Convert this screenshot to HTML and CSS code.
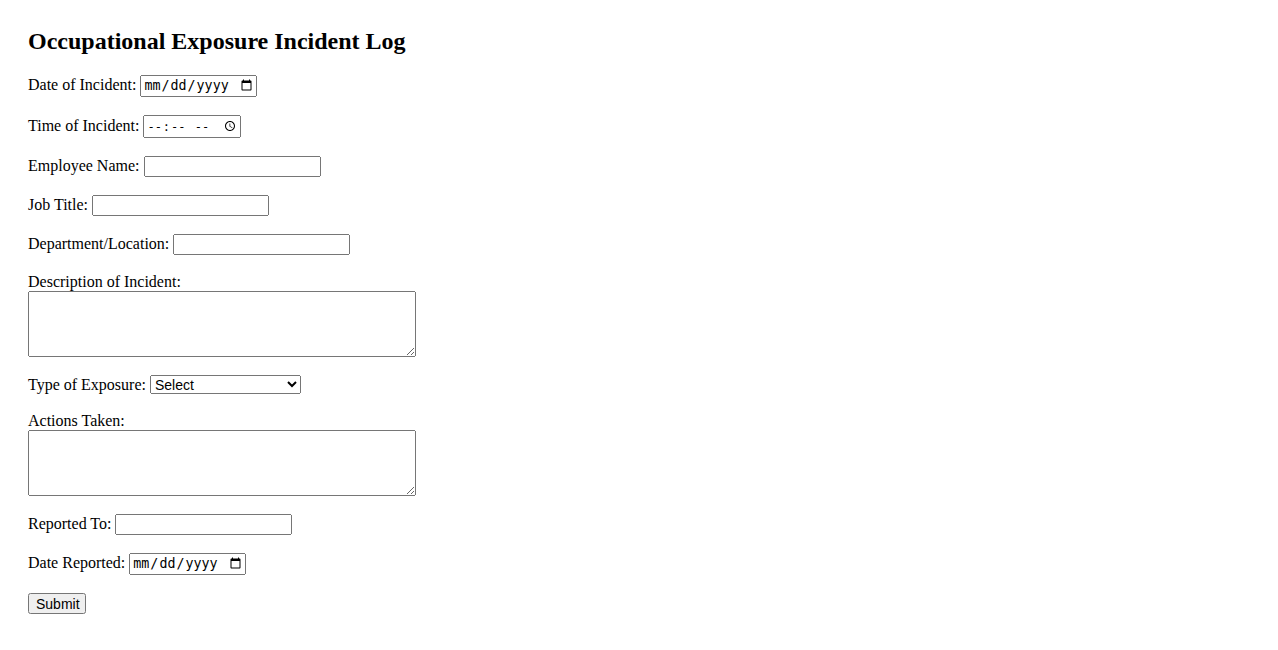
FILE: index.html
```html
<!DOCTYPE html>
<html lang="en">
<head>
<meta charset="utf-8">
<title>Occupational Exposure Incident Log</title>
<link rel="stylesheet" href="styles.css">
</head>
<body>
<div class="page">
  <h2 class="title">Occupational Exposure Incident Log</h2>
  <form class="log-form">
    <div class="field">
      <label for="date">Date of Incident:</label>
      <input class="date-input" type="date" id="date" name="date">
    </div>
    <div class="field">
      <label for="time">Time of Incident:</label>
      <input class="time-input" type="time" id="time" name="time">
    </div>
    <div class="field">
      <label for="name">Employee Name:</label>
      <input class="text-input" type="text" id="name" name="name">
    </div>
    <div class="field">
      <label for="job">Job Title:</label>
      <input class="text-input" type="text" id="job" name="job">
    </div>
    <div class="field">
      <label for="dept">Department/Location:</label>
      <input class="text-input" type="text" id="dept" name="dept">
    </div>
    <div class="field block">
      <label for="desc">Description of Incident:</label>
      <textarea class="area" id="desc" name="desc" rows="4" cols="50"></textarea>
    </div>
    <div class="field">
      <label for="type">Type of Exposure:</label>
      <select class="select" id="type" name="type">
        <option>Select</option>
        <option>Needlestick</option>
        <option>Splash</option>
        <option>Inhalation</option>
        <option>Other</option>
      </select>
    </div>
    <div class="field block">
      <label for="actions">Actions Taken:</label>
      <textarea class="area" id="actions" name="actions" rows="4" cols="50"></textarea>
    </div>
    <div class="field">
      <label for="reported">Reported To:</label>
      <input class="text-input" type="text" id="reported" name="reported">
    </div>
    <div class="field">
      <label for="datereported">Date Reported:</label>
      <input class="date-input" type="date" id="datereported" name="datereported">
    </div>
    <div class="field">
      <button class="submit" type="submit">Submit</button>
    </div>
  </form>
</div>
</body>
</html>
```
FILE: styles.css
```css
body {
  margin: 8px;
  font-family: "Liberation Serif", "Times New Roman", serif;
  font-size: 16px;
  color: #000;
  background: #fff;
}

.page {
  padding: 20px;
}

.title {
  margin: 0 0 20px 0;
  font-size: 24px;
  font-weight: bold;
}

.field {
  margin-bottom: 18px;
}

.field.block label {
  display: block;
}

input, select, textarea, button {
  box-sizing: border-box;
}

.text-input {
  width: 177px;
  height: 21px;
}

.date-input {
  width: 117px;
  height: 22px;
}

.time-input {
  width: 98px;
  height: 23px;
  font-size: 12px;
}

.select {
  width: 151px;
  height: 19px;
  font-family: "Liberation Sans", Arial, sans-serif;
  font-size: 14px;
}

.area {
  display: block;
  width: 388px;
  height: 66px;
}

.submit {
  width: 58px;
  height: 21px;
  font-family: "Liberation Sans", Arial, sans-serif;
  font-size: 14px;
}
```
